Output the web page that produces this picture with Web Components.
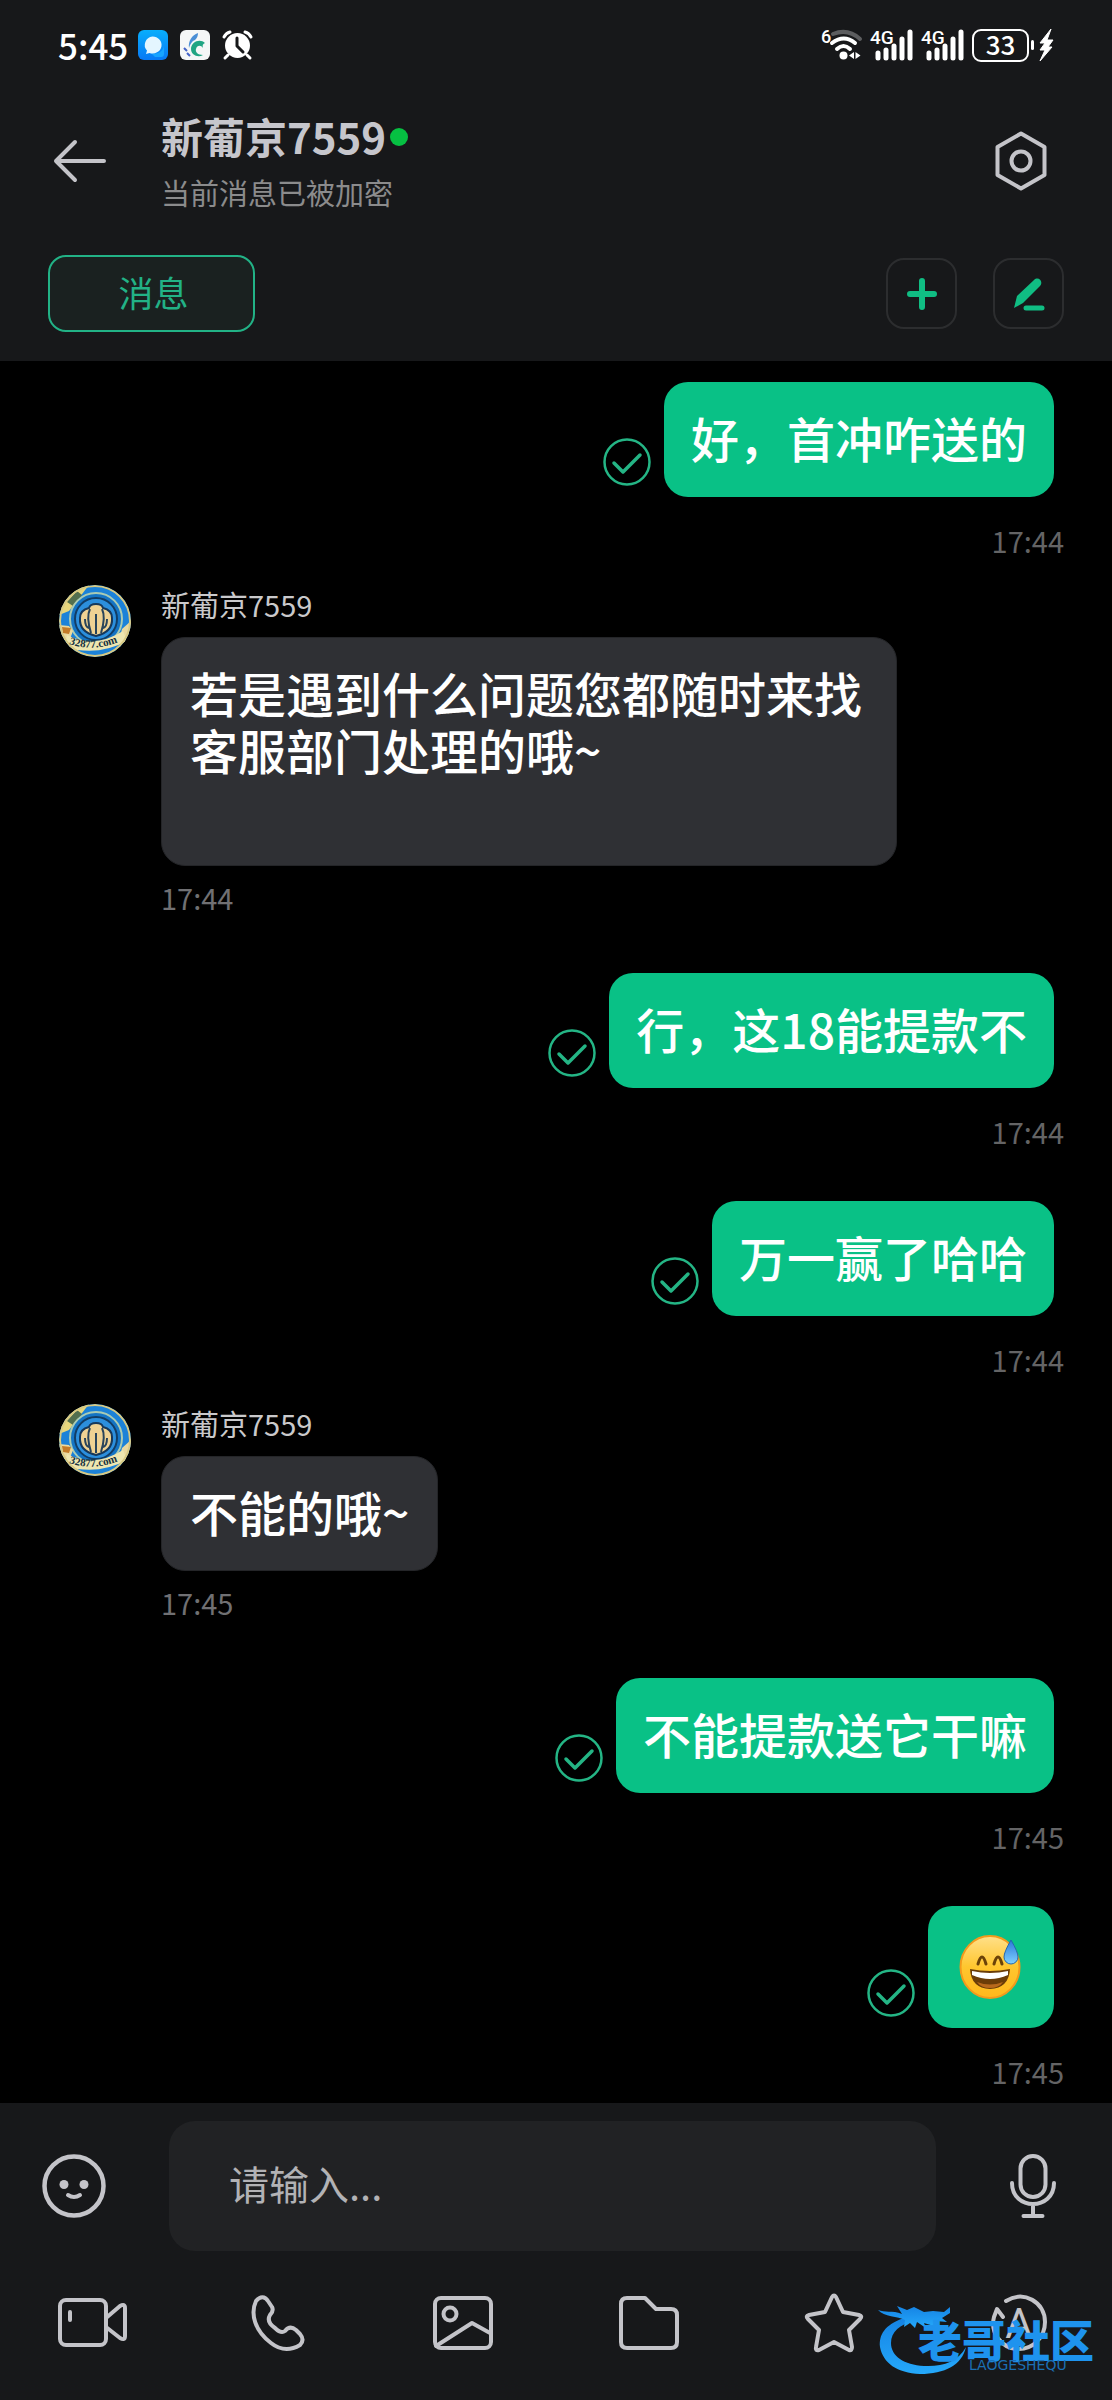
<!DOCTYPE html>
<html lang="zh-CN">
<head>
<meta charset="UTF-8">
<meta name="viewport" content="width=device-width, initial-scale=1">
<title>新葡京7559</title>
<style>
  body {
    margin: 0;
    background: #000;
    color: #fff;
    font-family: "Noto Sans CJK SC", "Noto Sans", sans-serif;
  }
</style>
</head>
<body>
<chat-app>
  <status-bar slot="top" time="5:45" battery="33"></status-bar>
  <chat-header slot="top" name="新葡京7559">当前消息已被加密</chat-header>
  <chat-tabs slot="top">消息</chat-tabs>

  <chat-message out time="17:44">好，首冲咋送的</chat-message>
  <chat-message name="新葡京7559" time="17:44">若是遇到什么问题您都随时来找客服部门处理的哦~<br><br></chat-message>
  <chat-message out time="17:44">行，这18能提款不</chat-message>
  <chat-message out time="17:44">万一赢了哈哈</chat-message>
  <chat-message name="新葡京7559" time="17:45">不能的哦~</chat-message>
  <chat-message out time="17:45">不能提款送它干嘛</chat-message>
  <chat-message out time="17:45"><ui-icon name="sweat"></ui-icon></chat-message>

  <chat-composer slot="bottom"></chat-composer>
  <site-mark slot="mark">老哥社区<span slot="sub">LAOGESHEQU</span></site-mark>
</chat-app>

<script>
// name: [width, height, markup]
const ICONS = {
  bubbleApp: [30, 30, `
    <defs><linearGradient id="g" x1="0" y1="0" x2="0" y2="1"><stop offset="0" stop-color="#08aefc"/><stop offset="1" stop-color="#0879f5"/></linearGradient></defs>
    <rect width="30" height="30" rx="6" fill="url(#g)"/>
    <path d="M12 22a9 8.500 0 0 0 14-7v9a3 3 0 0 1-3 3h-6z" fill="#17a4ff"/>
    <path d="M14.500 6.500a9 8.500 0 1 1-3 16.500L8 24l1-3.500a9 8.500 0 0 1 5.500-14z" fill="#e4f6ff"/>`],
  waveApp: [30, 30, `
    <rect width="30" height="30" rx="6" fill="#f5f7f7"/>
    <path d="M18 3c-6 2-10 8-9 15 1-4 3-7 6-8 2-2 3-4 3-7z" fill="#4b8fd6"/>
    <path d="M25 13c-5-5-14-1-14 6 0 6 7 9 12 6-5 0-8-3-7-6 1-4 5-4 7-1-1-3 0-4 2-5z" fill="#21a583"/>
    <path d="M4 18l3 3M7 23l3 3" stroke="#4464c8" stroke-width="2"/>`],
  alarm: [31, 30, `
    <circle cx="15.500" cy="15.500" r="12.500" fill="#fff"/>
    <path d="M2 7q2-4 6-5M29 7q-2-4-6-5M6 25l-3 3M25 25l3 3" fill="none" stroke="#fff" stroke-width="3" stroke-linecap="round"/>
    <path d="M15 8v8l6 6" fill="none" stroke="#17181a" stroke-width="3" stroke-linecap="round" stroke-linejoin="round"/>`],
  wifi: [41, 32, `
    <text x="0" y="14" font-size="18" font-weight="500" fill="#fff" font-family="Roboto, sans-serif">6</text>
    <path d="M12 5q15-6 27 5" fill="none" stroke="#5c5d5f" stroke-width="4" stroke-linecap="round"/>
    <path d="M11 14q12-9 23 0" fill="none" stroke="#fff" stroke-width="4" stroke-linecap="round"/>
    <path d="M16 20q6.500-6 13 0" fill="none" stroke="#fff" stroke-width="4" stroke-linecap="round"/>
    <circle cx="22.500" cy="26.500" r="4" fill="#fff"/>
    <path d="M33 23v7l-5-3.500zM34.500 23v7l5-3.500z" fill="#fff"/>`],
  signal: [43, 32, `
    <text x="0" y="15" font-size="19" font-weight="500" fill="#fff" font-family="Roboto, sans-serif">4G</text>
    <path d="M8 24v5M16 21v8M24 17v12M32 10v19M40 3v26" stroke="#fff" stroke-width="5" stroke-linecap="round"/>`],
  bolt: [16, 34, `<path d="M13 1L2 15h5l-5 7h5L2 33 14 19h-4l5-7H9z" fill="#fff" stroke="#fff" stroke-linejoin="round"/>`],
  back: [54, 44, `<path d="M51 22H3M22 3L3 22l19 19"/>`],
  hexagon: [52, 60, `<path d="M26 2.500L49.500 16v28L26 57.500 2.500 44V16z"/><circle cx="26" cy="30" r="9.500"/>`],
  plus: [30, 32, `<path d="M15 3v26M3 16h24" stroke="#10bd83" stroke-width="6"/>`],
  edit: [32, 34, `
    <path d="M1 31l3-12L21 3c4-4 10 1 6 6L10 26z" fill="#10bd83" stroke="none"/>
    <path d="M13 31h16" stroke="#10bd83" stroke-width="5"/>`],
  check: [48, 48, `
    <circle cx="24" cy="24" r="22.500" stroke="#24b585" stroke-width="2.500"/>
    <path d="M11 25l9 9 17-17" stroke="#24b585" stroke-width="3.500"/>`],
  smile: [64, 64, `
    <circle cx="32" cy="32" r="29.500" stroke-width="4.500"/>
    <circle cx="22" cy="30.500" r="4.500" fill="#c4c4c9" stroke="none"/><circle cx="42" cy="30.500" r="4.500" fill="#c4c4c9" stroke="none"/>
    <path d="M26 41q6 4 12 0"/>`],
  mic: [48, 66, `
    <rect x="11.500" y="3" width="25" height="41" rx="12.500"/>
    <path d="M3 30c0 28 42 28 42 0M24 51v12M14.500 63h19"/>`],
  video: [70, 50, `
    <rect x="2" y="2" width="46" height="45" rx="6"/>
    <path d="M48 20L62 8q5-3 5 2v28q0 5-5 2L48 29M12 14v8"/>`],
  phone: [54, 56, `
    <path d="M5 6C9 1 14 1 17 6l4 6q2 4-2 8-4 7 5 13 6 6 10 3 5-6 11-1l4 4q5 6 0 11-15 9-29-2C4 36-1 19 5 6z"/>`],
  image: [60, 54, `
    <rect x="2" y="2" width="56" height="50" rx="6"/><circle cx="17" cy="18" r="6.500"/>
    <path d="M3 50l36-23 18 10"/>`],
  folder: [60, 54, `<path d="M8 2h18l11 11h15q6 0 6 6v27q0 6-6 6H8q-6 0-6-6V8q0-6 6-6z"/>`],
  star: [58, 60, `<path d="M27 4q2-3 4 0l7 15 16 3q4 1 1 4L44 37l3 17q0 4-3 3l-15-8-15 8q-4 1-3-3l3-17L3 26q-3-3 1-4l16-3z"/>`],
  translate: [60, 60, `
    <path d="M17 8C35-3 56 9 56 29c0 16-13 28-28 27C12 55 1 39 5 24l3-8 6 8"/>
    <text x="30" y="45" text-anchor="middle" font-size="42" fill="#c4c4c9" stroke="none" font-family="Roboto, sans-serif">A</text>`],
  sweat: [62, 62, `
    <defs>
      <linearGradient id="f" x1="0" y1="0" x2="0" y2="1"><stop offset="0" stop-color="#ffe08a"/><stop offset=".5" stop-color="#ffc62e"/><stop offset="1" stop-color="#ffb81c"/></linearGradient>
      <linearGradient id="d" x1="0" y1="0" x2="0" y2="1"><stop offset="0" stop-color="#2a78d8"/><stop offset="1" stop-color="#7fd0ff"/></linearGradient>
    </defs>
    <ellipse cx="30" cy="32" rx="29.500" ry="31" fill="url(#f)" stroke="#f39a1c" stroke-width="2"/>
    <path d="M18 29q4-14 8 0M34 29q4-14 8 0" fill="none" stroke="#6b4208" stroke-width="3" stroke-linecap="round"/>
    <path d="M10 34q20 4 40 0-1 19-20 20-19-1-20-20z" fill="#6b3d08"/>
    <path d="M12 36q18 4 36 0v4q-18 8-36 0z" fill="#fff"/>
    <path d="M17 47q13 5 26 0-4 6-13 6t-13-6z" fill="#b8691c"/>
    <path d="M51 5q7 12 7 17a7 7 0 0 1-14 0q0-5 7-17z" fill="url(#d)" stroke="#2368b0"/>`],
  avatar: [72, 72, `
    <defs><clipPath id="c"><circle cx="36" cy="36" r="36"/></clipPath><path id="arc" d="M10 59Q36 68 64 55"/></defs>
    <g clip-path="url(#c)" stroke="none">
      <rect width="72" height="72" fill="#1c82d8"/>
      <path d="M0 30V0h30L10 26z" fill="#e6d67c"/><path d="M8 17L18 6l5 4-9 11z" fill="#526f4e"/>
      <circle cx="37" cy="34" r="26" fill="#1474c4" stroke="#a9cbb4" stroke-width="2"/>
      <circle cx="37" cy="34" r="21" fill="#2c8fdd" stroke="#123d65" stroke-width="2"/>
      <path d="M37 19q6 0 7 4 9 2 9 10 1 14-16 18-17-4-16-18 0-8 9-10 1-4 7-4z" fill="#efd293" stroke="#17385a" stroke-width="2"/>
      <path d="M31 24q-4 8 1 24M43 24q4 8-1 24M37 29v20M26 34q0 8 4 9M48 34q0 8-4 9" fill="none" stroke="#29445a" stroke-width="2"/>
      <path d="M0 40l10 1 4 5-3 8-11 2zM72 36l-9 8-2 8 4 6 7-6z" fill="#ead9a0"/>
      <path d="M3 42l9 1-2 6-6-1z" fill="#c47b28"/>
      <path d="M8 50q28 14 56-4l4 10Q38 72 6 62z" fill="#eee6b0"/>
      <circle cx="36" cy="36" r="35" fill="none" stroke="#d8c983" stroke-width="2"/>
      <text font-size="11" font-weight="700" fill="#16323f" font-family="Liberation Serif, serif"><textPath href="#arc">32877.com</textPath></text>
    </g>`],
  dragon: [90, 70, `
    <defs><linearGradient id="b" x1="0" y1="0" x2="0" y2="1"><stop offset="0" stop-color="#1583e4"/><stop offset="1" stop-color="#25a9fb"/></linearGradient></defs>
    <g fill="url(#b)" stroke="none">
      <path d="M26 13C6 20 1 30 2 42c3 16 17 26 40 27 25 0 42-9 46-27-8 15-24 20-42 19-20-1-33-10-33-23 0-11 9-19 23-22z"/>
      <path d="M0 5c7 3 14 0 24 4l-5-8 10 4 7-3 10 5 9-1 11 1 6-5v6l-8 5 5 4-11-1 1 6-13-4 2 5-9-6-2 6-5-5-6 4 1-7C20 11 6 12 0 5z"/>
    </g>`]
};

class UiIcon extends HTMLElement {
  connectedCallback() {
    const [w, h, body] = ICONS[this.getAttribute('name')];
    this.attachShadow({ mode: 'open' }).innerHTML = `
      <style>
        :host { display: block; flex: none; }
        svg { display: block; overflow: visible; }
      </style>
      <svg width="${w}" height="${h}" viewBox="0 0 ${w} ${h}" fill="none" aria-hidden="true">
        ${this.outline(body)}
      </svg>
    `;
  }

  // Line icons share one pen; the coloured ones bring their own
  outline(body) {
    const own = ['bubbleApp', 'waveApp', 'alarm', 'wifi', 'signal', 'bolt', 'sweat', 'avatar', 'dragon'];
    if (own.includes(this.getAttribute('name'))) return body;
    return `<g stroke="#c4c4c9" stroke-width="4" stroke-linecap="round" stroke-linejoin="round">${body}</g>`;
  }
}
customElements.define('ui-icon', UiIcon);

class StatusBar extends HTMLElement {
  connectedCallback() {
    this.attachShadow({ mode: 'open' }).innerHTML = `
      <style>
        :host {
          display: flex;
          justify-content: space-between;
          align-items: center;
          height: 90px;
          padding: 0 58px 2px;
        }
        div { display: flex; align-items: center; }
        .left { gap: 12px; }
        .right { gap: 8px; }
        time { font-size: 35px; font-weight: 500; line-height: 44px; margin-right: -2px; }
        .battery {
          box-sizing: border-box;
          width: 57px; height: 33px;
          border: 2px solid #fff;
          border-radius: 9px;
          justify-content: center;
          font-size: 26px;
          font-weight: 500;
          line-height: 26px;
          align-items: flex-start;
        }
        .cell { gap: 2px; }
        .cell i { width: 3px; height: 10px; border-radius: 2px; background: #fff; }
        .power { gap: 4px; }
      </style>
      <div class="left">
        <time>${this.getAttribute('time')}</time>
        <ui-icon name="bubbleApp"></ui-icon>
        <ui-icon name="waveApp"></ui-icon>
        <ui-icon name="alarm"></ui-icon>
      </div>
      <div class="right">
        <ui-icon name="wifi"></ui-icon>
        <ui-icon name="signal"></ui-icon>
        <ui-icon name="signal"></ui-icon>
        <div class="power">
          <div class="cell"><div class="battery">${this.getAttribute('battery')}</div><i></i></div>
          <ui-icon name="bolt"></ui-icon>
        </div>
      </div>
    `;
  }
}
customElements.define('status-bar', StatusBar);

class ChatHeader extends HTMLElement {
  connectedCallback() {
    this.attachShadow({ mode: 'open' }).innerHTML = `
      <style>
        :host {
          display: flex;
          align-items: center;
          height: 137px;
          padding: 0 65px 0 53px;
        }
        button { background: none; border: none; padding: 0; cursor: pointer; }
        .title { flex: 1; min-width: 0; margin-left: 54px; padding-bottom: 4px; }
        h1 {
          display: flex;
          align-items: center;
          gap: 4px;
          margin: 0;
          font-size: 42px;
          line-height: 67px;
          color: #c6c6cc;
        }
        h1 i { width: 18px; height: 18px; margin-top: 4px; border-radius: 50%; background: #06c042; }
        p { margin: 0; font-size: 29px; line-height: 47px; color: #8b8b8c; }
      </style>
      <button aria-label="返回"><ui-icon name="back"></ui-icon></button>
      <div class="title">
        <h1>${this.getAttribute('name')}<i></i></h1>
        <p><slot></slot></p>
      </div>
      <button aria-label="设置"><ui-icon name="hexagon"></ui-icon></button>
    `;
  }
}
customElements.define('chat-header', ChatHeader);

class ChatTabs extends HTMLElement {
  connectedCallback() {
    this.attachShadow({ mode: 'open' }).innerHTML = `
      <style>
        :host {
          display: flex;
          align-items: center;
          gap: 36px;
          padding: 26px 48px 29px;
        }
        button {
          display: grid;
          place-items: center;
          box-sizing: border-box;
          width: 71px; height: 71px;
          padding: 0;
          background: none;
          border: 2px solid #2c2d2f;
          border-radius: 18px;
          cursor: pointer;
        }
        .tab {
          width: 207px; height: 77px;
          margin-right: auto;
          padding: 0 0 4px 4px;
          background: #1a2120;
          border-color: #22b286;
          color: #22b286;
          font: inherit;
          font-size: 35px;
        }
      </style>
      <button class="tab"><slot></slot></button>
      <button aria-label="添加"><ui-icon name="plus"></ui-icon></button>
      <button aria-label="编辑"><ui-icon name="edit"></ui-icon></button>
    `;
  }
}
customElements.define('chat-tabs', ChatTabs);

class ChatMessage extends HTMLElement {
  connectedCallback() {
    const out = this.hasAttribute('out');
    this.attachShadow({ mode: 'open' }).innerHTML = `
      <style>
        :host { display: block; padding: 0 48px 9px 59px; }
        :host([out]) { padding: 25px 48px 3px; }
        :host(.first) { padding-top: 0; }
        .in { display: flex; align-items: flex-start; gap: 30px; }
        .body { min-width: 0; }
        .name { font-size: 29px; line-height: 38px; color: #c9c9cb; }
        .row { display: flex; justify-content: flex-end; align-items: flex-end; gap: 13px; margin-right: 10px; }
        .row > ui-icon { margin-bottom: 11px; }
        .bubble {
          box-sizing: border-box;
          width: fit-content;
          max-width: 736px;
          padding: 27px 27px 31px;
          border-radius: 24px;
          background: #09c186;
          font-size: 48px;
          font-weight: 500;
          line-height: 57px;
          overflow-wrap: anywhere;
        }
        .in .bubble {
          margin-top: 14px;
          padding: 26px 28px 30px;
          border: 1px solid #242528;
          background: #2f3034;
        }
        ::slotted(ui-icon) { margin: 2px 5px 0; }
        time { display: block; font-size: 29px; line-height: 34px; color: #707073; }
        .in time { margin-top: 14px; }
        .out time { margin-top: 26px; text-align: right; color: #646465; }
      </style>
      ${out ? this.outgoing() : this.incoming()}
    `;
    this.classList.toggle('first', this.parentElement.querySelector('chat-message') === this);
  }

  outgoing() {
    return `
      <div class="out">
        <div class="row">
          <ui-icon name="check"></ui-icon>
          <div class="bubble"><slot></slot></div>
        </div>
        <time>${this.getAttribute('time')}</time>
      </div>
    `;
  }

  incoming() {
    return `
      <div class="in">
        <ui-icon name="avatar"></ui-icon>
        <div class="body">
          <div class="name">${this.getAttribute('name')}</div>
          <div class="bubble"><slot></slot></div>
          <time>${this.getAttribute('time')}</time>
        </div>
      </div>
    `;
  }
}
customElements.define('chat-message', ChatMessage);

class ChatComposer extends HTMLElement {
  connectedCallback() {
    const tools = [
      ['video', '视频'], ['phone', '语音'], ['image', '图片'],
      ['folder', '文件'], ['star', '收藏'], ['translate', '翻译']
    ];
    this.attachShadow({ mode: 'open' }).innerHTML = `
      <style>
        :host { display: block; padding: 18px 0 5px; background: #17181a; }
        form { display: flex; align-items: center; padding: 0 55px 0 42px; }
        button { display: grid; place-items: center; background: none; border: none; padding: 0; cursor: pointer; }
        input {
          flex: 1;
          min-width: 0;
          box-sizing: border-box;
          height: 130px;
          margin: 0 73px 0 63px;
          padding: 0 60px 6px;
          border: none;
          border-radius: 26px;
          background: #212224;
          color: #c4c4c9;
          font: inherit;
          font-size: 40px;
        }
        input::placeholder { color: #b2b2b5; opacity: 1; }
        .tools { display: grid; grid-template-columns: repeat(6, 1fr); height: 144px; }
      </style>
      <form>
        <button type="button" aria-label="表情"><ui-icon name="smile"></ui-icon></button>
        <input type="text" placeholder="请输入..." aria-label="请输入">
        <button type="button" aria-label="语音输入"><ui-icon name="mic"></ui-icon></button>
      </form>
      <div class="tools">
        ${tools.map(([icon, label]) => `<button aria-label="${label}"><ui-icon name="${icon}"></ui-icon></button>`).join('')}
      </div>
    `;
  }
}
customElements.define('chat-composer', ChatComposer);

class SiteMark extends HTMLElement {
  connectedCallback() {
    this.attachShadow({ mode: 'open' }).innerHTML = `
      <style>
        :host { display: flex; pointer-events: none; color: #1e93ee; }
        .words { margin: 15px 0 0 -50px; }
        .big { font-size: 44px; font-weight: 900; line-height: 38px; }
        .small { padding-left: 51px; font: 14px/14px "DejaVu Sans", sans-serif; color: #1b6fb4; }
      </style>
      <ui-icon name="dragon"></ui-icon>
      <div class="words">
        <div class="big"><slot></slot></div>
        <div class="small"><slot name="sub"></slot></div>
      </div>
    `;
  }
}
customElements.define('site-mark', SiteMark);

class ChatApp extends HTMLElement {
  connectedCallback() {
    this.attachShadow({ mode: 'open' }).innerHTML = `
      <style>
        :host { display: flex; flex-direction: column; position: relative; min-height: 100vh; }
        header { background: #17181a; }
        main {
          flex: 1;
          display: flex;
          flex-direction: column;
          gap: 25px;
          padding: 21px 0 8px;
        }
        .mark { position: absolute; right: 18px; bottom: 25px; }
      </style>
      <header><slot name="top"></slot></header>
      <main><slot></slot></main>
      <footer><slot name="bottom"></slot></footer>
      <div class="mark"><slot name="mark"></slot></div>
    `;
  }
}
customElements.define('chat-app', ChatApp);
</script>
</body>
</html>
